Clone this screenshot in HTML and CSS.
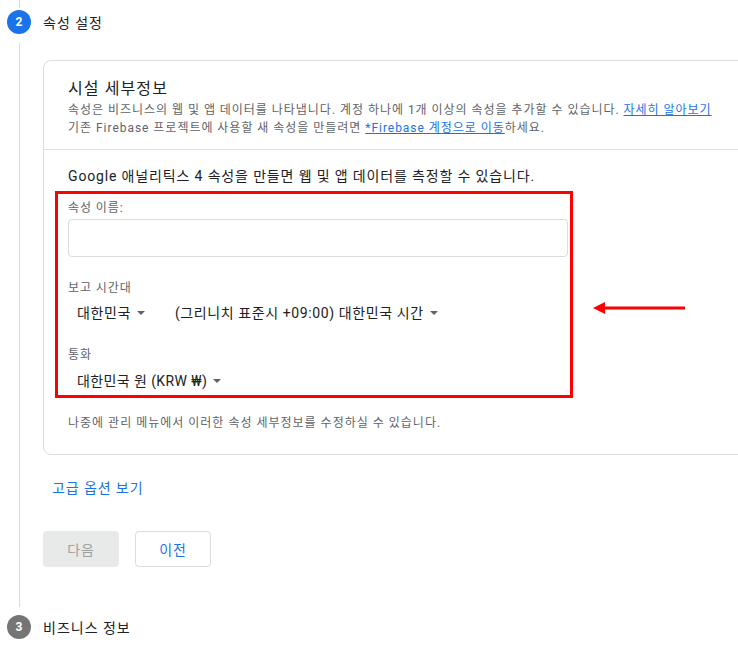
FILE: index.html
```html
<!DOCTYPE html>
<html lang="ko">
<head>
<meta charset="utf-8">
<link rel="stylesheet" href="styles.css">
</head>
<body>
<div class="page">
  <div class="step-head">
    <div class="rail"><span class="line-top"></span><span class="num active">2</span></div>
    <div class="step-title">속성 설정</div>
  </div>
  <div class="step-body">
    <div class="rail-line"></div>
    <div class="content">
      <div class="card">
        <div class="card-top">
          <div class="card-title">시설 세부정보</div>
          <div class="desc">속성은 비즈니스의 웹 및 앱 데이터를 나타냅니다. 계정 하나에 1개 이상의 속성을 추가할 수 있습니다. <a href="#">자세히 알아보기</a></div>
          <div class="desc">기존 Firebase 프로젝트에 사용할 새 속성을 만들려면 <a href="#">*Firebase 계정으로 이동</a>하세요.</div>
        </div>
        <div class="card-main">
          <div class="intro">Google 애널리틱스 4 속성을 만들면 웹 및 앱 데이터를 측정할 수 있습니다.</div>
          <div class="highlight">
            <div class="label">속성 이름:</div>
            <div class="input"></div>
            <div class="label label-gap">보고 시간대</div>
            <div class="selects">
              <span class="select first">대한민국 <span class="caret"></span></span>
              <span class="select">(그리니치 표준시 +09:00) 대한민국 시간 <span class="caret"></span></span>
            </div>
            <div class="label label-gap2">통화</div>
            <div class="selects currency">
              <span class="select">대한민국 원 (KRW ₩) <span class="caret"></span></span>
            </div>
          </div>
          <div class="note">나중에 관리 메뉴에서 이러한 속성 세부정보를 수정하실 수 있습니다.</div>
        </div>
        <svg class="arrow" width="96" height="14" viewBox="0 0 96 14"><line x1="10" y1="7" x2="92" y2="7" stroke="#ff0000" stroke-width="3"/><polygon points="0,7 12,1 12,13" fill="#ff0000"/></svg>
      </div>
      <a class="adv" href="#">고급 옵션 보기</a>
      <div class="buttons">
        <button class="btn disabled">다음</button>
        <button class="btn outline">이전</button>
      </div>
    </div>
  </div>
  <div class="step-head last">
    <div class="rail"><span class="num grey">3</span></div>
    <div class="step-title">비즈니스 정보</div>
  </div>
</div>
</body>
</html>
```
FILE: styles.css
```css
html, body { margin: 0; padding: 0; background: #fff; overflow: hidden; }
body { font-family: Roboto, "Noto Sans CJK KR", sans-serif; color: #202124; width: 738px; height: 647px; }
.page { width: 738px; }
.step-head { display: flex; align-items: center; height: 43px; }
.step-head.last { height: 40px; }
.rail { width: 38px; height: 100%; position: relative; display: flex; align-items: center; flex-shrink: 0; }
.line-top { position: absolute; left: 19px; top: 0; width: 1px; height: 8px; background: #dadce0; }
.num { margin-left: 7px; width: 24px; height: 24px; border-radius: 50%; color: #fff; font-size: 12px; font-weight: 700; display: flex; align-items: center; justify-content: center; }
.num.active { background: #1a73e8; }
.num.grey { background: #757575; }
.step-title { margin-left: 5px; font-size: 14px; color: #202124; letter-spacing: 1px; }
.step-body { display: flex; height: 564px; }
.rail-line { width: 1px; flex-shrink: 0; margin-left: 19px; background: #dadce0; height: 564px; }
.content { margin-left: 23px; flex: 1; min-width: 0; }
.card { position: relative; margin-top: 17px; width: 720px; height: 395px; border: 1px solid #dadce0; border-radius: 8px; box-sizing: border-box; }
.card-top { padding: 18px 24px 0 24px; height: 89px; box-sizing: border-box; border-bottom: 1px solid #e0e0e0; }
.card-title { font-size: 16px; line-height: 20px; color: #202124; margin-bottom: 2px; letter-spacing: 1.1px; }
.desc { font-size: 12px; line-height: 18px; color: #5f6368; white-space: nowrap; letter-spacing: 0.97px; }
.desc a { color: #1a73e8; }
.card-main { padding: 16px 0 0 11px; }
.intro { font-size: 14px; line-height: 20px; color: #202124; margin-left: 13px; letter-spacing: 0.85px; }
.highlight { margin-top: 5px; width: 518px; height: 207px; border: 3px solid #ff0000; box-sizing: border-box; padding: 6px 0 0 10px; }
.label { font-size: 12px; line-height: 16px; color: #5f6368; letter-spacing: 0.9px; }
.label-gap { margin-top: 23px; }
.label-gap2 { margin-top: 23px; }
.input { margin-top: 3px; width: 500px; height: 38px; border: 1px solid #dadce0; border-radius: 4px; box-sizing: border-box; }
.selects { display: flex; margin-top: 4px; height: 24px; align-items: center; }
.selects.currency { margin-top: 5px; }
.select { font-size: 14px; color: #202124; padding-left: 9px; display: inline-flex; align-items: center; letter-spacing: 0.6px; }
.select.first { margin-right: 21px; }
.caret { display: inline-block; width: 0; height: 0; border-left: 4px solid transparent; border-right: 4px solid transparent; border-top: 4px solid #5f6368; margin-left: 6px; margin-top: 2px; }
.currency .select { letter-spacing: 0.4px; }
.note { font-size: 12px; line-height: 16px; color: #5f6368; margin: 17px 0 0 13px; letter-spacing: 1px; }
.arrow { position: absolute; left: 549px; top: 240px; }
.adv { display: inline-block; margin: 22px 0 0 9px; font-size: 14px; color: #1a73e8; text-decoration: none; letter-spacing: 0.9px; }
.buttons { display: flex; gap: 16px; margin-top: 34px; }
.btn { width: 76px; height: 36px; border-radius: 4px; font-size: 14px; font-family: Roboto, "Noto Sans CJK KR", sans-serif; box-sizing: border-box; letter-spacing: 0.8px; }
.btn.disabled { background: #e8eaea; border: none; color: #a0a0a0; }
.btn.outline { background: #fff; border: 1px solid #dadce0; color: #1a73e8; }
```
